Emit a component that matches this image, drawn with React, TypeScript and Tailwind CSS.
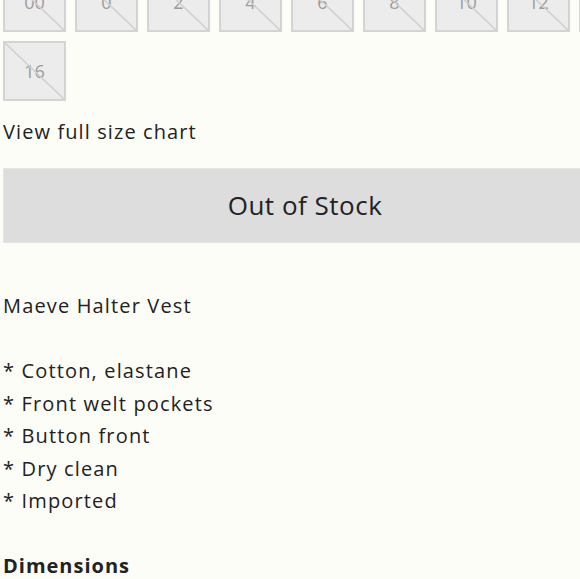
import React from "react";

const sizes = ["00", "0", "2", "4", "6", "8", "10", "12", "14", "16"];

function SizeBox({ label }: { label: string }) {
  return (
    <div className="relative w-[63px] h-[60px] border-2 border-[#d4d4d4] bg-[#ececec] flex items-center justify-center text-[18px] text-[#9b9b9b]">
      <span>{label}</span>
      <svg className="absolute inset-0 w-full h-full" viewBox="0 0 59 56" preserveAspectRatio="none">
        <line x1="0" y1="0" x2="59" y2="56" stroke="#cfcfcf" strokeWidth="1.5" />
      </svg>
    </div>
  );
}

export default function App() {
  return (
    <div
      className="w-[580px] h-[579px] overflow-hidden bg-[#fdfdf8] text-[#222222]"
      style={{ fontFamily: '"Open Sans", "Noto Sans", sans-serif' }}
    >
      <div className="w-[650px] pl-[3px] mt-[-28px]">
        <div className="flex flex-wrap gap-[9px] w-[650px]">
          {sizes.map((s) => (
            <SizeBox key={s} label={s} />
          ))}
        </div>
        <div className="mt-[15px] text-[20px] leading-[32px] tracking-[1.1px]">View full size chart</div>
        <div className="mt-[20px] w-[604px] h-[75px] bg-[#dddddd] border border-[#e4e4e4] flex items-center justify-center text-[26px] tracking-[0.5px] text-[#222222]">
          Out of Stock
        </div>
        <div className="mt-[47px] text-[20px] leading-[32.5px] tracking-[1.15px]">
          <div>Maeve Halter Vest</div>
          <div className="h-[32.5px]" />
          <div>* Cotton, elastane</div>
          <div>* Front welt pockets</div>
          <div>* Button front</div>
          <div>* Dry clean</div>
          <div>* Imported</div>
          <div className="h-[32.5px]" />
          <div className="font-bold tracking-[1px]">Dimensions</div>
        </div>
      </div>
    </div>
  );
}
